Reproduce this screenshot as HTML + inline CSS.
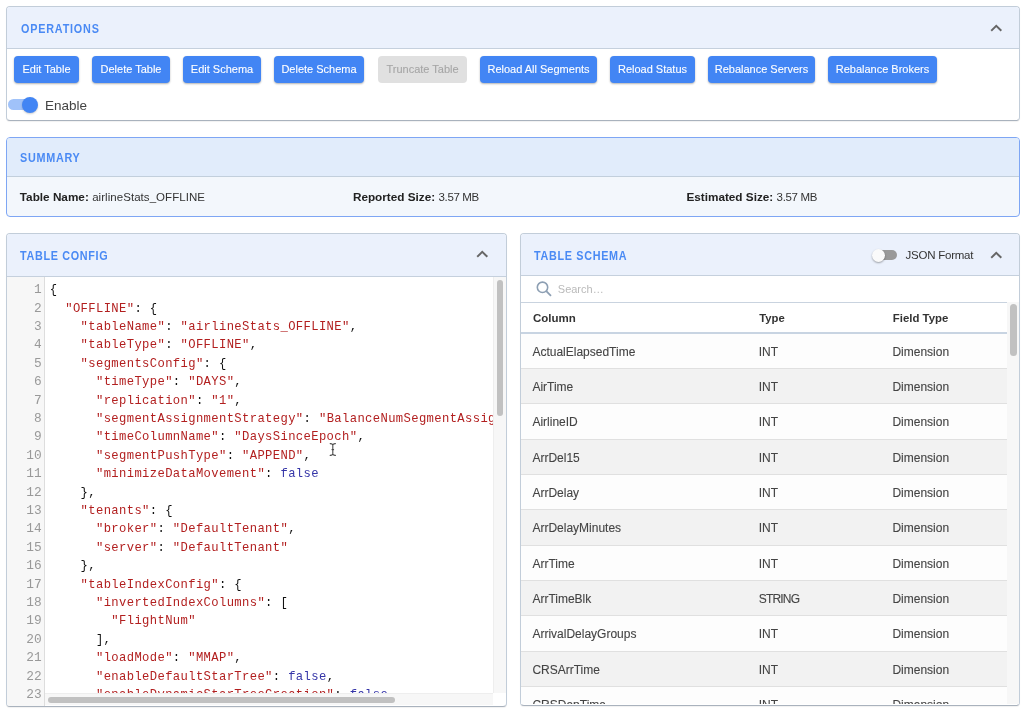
<!DOCTYPE html><html><head><meta charset="utf-8"><style>
*{box-sizing:border-box;margin:0;padding:0}
html,body{width:1024px;height:712px;overflow:hidden;background:#fff;font-family:"Liberation Sans", sans-serif;}
.abs{position:absolute}
.panel{position:absolute;border:1px solid #c2cdd9;border-bottom-color:#a9b2bd;border-radius:4px;background:#fff;box-shadow:0 1px 1px rgba(0,0,0,0.06);overflow:hidden}
.hdr{position:absolute;left:0;right:0;top:0;background:#ebf1fc;border-bottom:1px solid #c5d0dd}
.title{position:absolute;font-weight:bold;font-size:12px;line-height:12px;color:#4a8af4;white-space:nowrap;letter-spacing:1px;transform:scaleX(0.9);transform-origin:0 0}
.btn{position:absolute;top:56px;height:27px;background:#4285f4;color:#fff;border-radius:4px;font-size:11px;line-height:27px;text-align:center;white-space:nowrap;box-shadow:0 1px 2px rgba(0,0,0,0.3);-webkit-text-stroke:0.1px currentColor}
.btn.dis{background:#e0e0e0;color:#a6a6a6;box-shadow:none}
.chev{position:absolute}
.txt{position:absolute;white-space:nowrap;font-size:12px;line-height:12px;color:#333}
.code{position:absolute;white-space:pre;font-family:"Liberation Mono", monospace;font-size:12.2px;letter-spacing:0.375px;line-height:18.39px;color:#111}
.s{color:#b21f1f}
.a{color:#3535a8}
.ln{position:absolute;font-family:"Liberation Mono", monospace;font-size:12.8px;line-height:18.39px;color:#999;text-align:right;white-space:pre}
</style></head><body><div id="root" style="position:absolute;left:0;top:0;width:1024px;height:712px;will-change:transform">
<div class="panel" style="left:6px;top:6px;width:1014px;height:115px">
<div class="hdr" style="height:42px"></div>
<div class="title" style="left:14px;top:16px;letter-spacing:0.9px">OPERATIONS</div>
</div>
<svg class="abs" style="left:989.5px;top:24.3px" width="12.5" height="8" viewBox="-1 -1 12.5 8"><polyline points="0.9,5.1 5.25,0.9 9.6,5.1" fill="none" stroke="#666" stroke-width="2" stroke-linecap="square"/></svg>
<div class="btn" style="left:14px;width:65px">Edit Table</div>
<div class="btn" style="left:92px;width:78px">Delete Table</div>
<div class="btn" style="left:183px;width:78px">Edit Schema</div>
<div class="btn" style="left:274px;width:90px">Delete Schema</div>
<div class="btn dis" style="left:378px;width:89px">Truncate Table</div>
<div class="btn" style="left:480px;width:117px">Reload All Segments</div>
<div class="btn" style="left:610px;width:85px">Reload Status</div>
<div class="btn" style="left:708px;width:107px">Rebalance Servers</div>
<div class="btn" style="left:828px;width:109px">Rebalance Brokers</div>
<div class="abs" style="left:8px;top:99px;width:28px;height:11px;border-radius:6px;background:#a0c2f9"></div>
<div class="abs" style="left:22px;top:96.5px;width:16px;height:16px;border-radius:50%;background:#4285f4;box-shadow:0 1px 2px rgba(0,0,0,0.2)"></div>
<div class="txt" style="left:45px;top:99px;font-size:13.5px;line-height:14px;color:#444">Enable</div>
<div class="panel" style="left:6px;top:137px;width:1014px;height:80px;border-color:#7ea6f4;background:#f3f7fc;box-shadow:none">
<div class="hdr" style="height:39px;background:#e1ecfb;border-bottom-color:#c2cfdc"></div>
<div class="title" style="left:13px;top:14px;letter-spacing:0.8px">SUMMARY</div>
</div>
<div class="txt" style="left:19.8px;top:191px"><b style="color:#222;font-size:11.75px">Table Name:</b> <span style="font-size:11.5px;letter-spacing:0.05px">airlineStats_OFFLINE</span></div>
<div class="txt" style="left:352.9px;top:191px"><b style="color:#222;font-size:11.75px">Reported Size:</b> <span style="font-size:11.5px;letter-spacing:-0.35px">3.57 MB</span></div>
<div class="txt" style="left:686.4px;top:191px"><b style="color:#222;font-size:11.75px">Estimated Size:</b> <span style="font-size:11.5px;letter-spacing:-0.35px">3.57 MB</span></div>
<div class="panel" style="left:6px;top:233px;width:501px;height:474px">
<div class="hdr" style="height:43px"></div>
<div class="title" style="left:13px;top:16px;letter-spacing:0.75px">TABLE CONFIG</div>
<div class="abs" style="left:0;top:43px;width:38px;bottom:0;background:#f7f7f7;border-right:1px solid #ddd"></div>
</div>
<svg class="abs" style="left:476px;top:250.3px" width="12.5" height="8" viewBox="-1 -1 12.5 8"><polyline points="0.9,5.1 5.25,0.9 9.6,5.1" fill="none" stroke="#666" stroke-width="2" stroke-linecap="square"/></svg>
<div class="abs" style="left:45px;top:277px;width:448px;height:416px;overflow:hidden">
<div class="code" style="left:4.8px;top:4.300000000000011px">{
  <span class="s">&quot;OFFLINE&quot;</span>: {
    <span class="s">&quot;tableName&quot;</span>: <span class="s">&quot;airlineStats_OFFLINE&quot;</span>,
    <span class="s">&quot;tableType&quot;</span>: <span class="s">&quot;OFFLINE&quot;</span>,
    <span class="s">&quot;segmentsConfig&quot;</span>: {
      <span class="s">&quot;timeType&quot;</span>: <span class="s">&quot;DAYS&quot;</span>,
      <span class="s">&quot;replication&quot;</span>: <span class="s">&quot;1&quot;</span>,
      <span class="s">&quot;segmentAssignmentStrategy&quot;</span>: <span class="s">&quot;BalanceNumSegmentAssignmentStrategy&quot;</span>,
      <span class="s">&quot;timeColumnName&quot;</span>: <span class="s">&quot;DaysSinceEpoch&quot;</span>,
      <span class="s">&quot;segmentPushType&quot;</span>: <span class="s">&quot;APPEND&quot;</span>,
      <span class="s">&quot;minimizeDataMovement&quot;</span>: <span class="a">false</span>
    },
    <span class="s">&quot;tenants&quot;</span>: {
      <span class="s">&quot;broker&quot;</span>: <span class="s">&quot;DefaultTenant&quot;</span>,
      <span class="s">&quot;server&quot;</span>: <span class="s">&quot;DefaultTenant&quot;</span>
    },
    <span class="s">&quot;tableIndexConfig&quot;</span>: {
      <span class="s">&quot;invertedIndexColumns&quot;</span>: [
        <span class="s">&quot;FlightNum&quot;</span>
      ],
      <span class="s">&quot;loadMode&quot;</span>: <span class="s">&quot;MMAP&quot;</span>,
      <span class="s">&quot;enableDefaultStarTree&quot;</span>: <span class="a">false</span>,
      <span class="s">&quot;enableDynamicStarTreeCreation&quot;</span>: <span class="a">false</span>,</div>
</div>
<div class="abs" style="left:7px;top:277px;width:37px;height:428px;overflow:hidden">
<div class="ln" style="right:2.4px;top:4.300000000000011px">1
2
3
4
5
6
7
8
9
10
11
12
13
14
15
16
17
18
19
20
21
22
23</div>
</div>
<div class="abs" style="left:493px;top:277px;width:13px;height:416px;background:#f7f7f7;border-left:1px solid #eee"></div>
<div class="abs" style="left:497px;top:279.5px;width:6px;height:136.5px;border-radius:3px;background:#c1c1c1"></div>
<div class="abs" style="left:45px;top:693px;width:448px;height:12px;background:#f7f7f7;border-top:1px solid #eee"></div>
<div class="abs" style="left:48px;top:697px;width:347px;height:6px;border-radius:3px;background:#c1c1c1"></div>
<svg class="abs" style="left:328px;top:441px" width="10" height="17" viewBox="0 0 10 17"><path d="M2.2 2.6Q4.8 2.8 4.8 4.2Q4.8 2.8 7.4 2.6M4.8 4v9.4M2.2 14.4Q4.8 14.2 4.8 12.8Q4.8 14.2 7.4 14.4M4 8.6h1.6" fill="none" stroke="#4a4a4a" stroke-width="1.1" stroke-linecap="round"/></svg>
<div class="panel" style="left:520px;top:233px;width:500px;height:473px">
<div class="hdr" style="height:42px"></div>
<div class="title" style="left:13px;top:16px;letter-spacing:0.76px">TABLE SCHEMA</div>
</div>
<svg class="abs" style="left:989.5px;top:250.6px" width="12.5" height="8" viewBox="-1 -1 12.5 8"><polyline points="0.9,5.1 5.25,0.9 9.6,5.1" fill="none" stroke="#666" stroke-width="2" stroke-linecap="square"/></svg>
<div class="abs" style="left:878px;top:249.5px;width:19px;height:10.5px;border-radius:5px;background:#999"></div>
<div class="abs" style="left:871.5px;top:248.5px;width:13.5px;height:13.5px;border-radius:50%;background:#fafafa;box-shadow:0 1px 2px rgba(0,0,0,0.35)"></div>
<div class="txt" style="left:905.6px;top:249px;color:#333;font-size:11.5px;letter-spacing:-0.25px">JSON Format</div>
<svg class="abs" style="left:535px;top:280px" width="18" height="18" viewBox="0 0 18 18"><circle cx="7.5" cy="7.3" r="5.2" fill="none" stroke="#8d9fb3" stroke-width="1.6"/><line x1="11.3" y1="11.1" x2="16" y2="15.8" stroke="#8d9fb3" stroke-width="1.8"/></svg>
<div class="txt" style="left:557.8px;top:283px;color:#bababa;font-size:11px">Search…</div>
<div class="abs" style="left:521px;top:302px;width:486px;height:1px;background:#c9d3df"></div>
<div class="txt" style="left:533px;top:312px;font-weight:bold;font-size:11.5px;color:#333">Column</div>
<div class="txt" style="left:759.2px;top:312px;font-weight:bold;font-size:11.3px;color:#333">Type</div>
<div class="txt" style="left:892.8px;top:312px;font-weight:bold;font-size:11.4px;color:#333">Field Type</div>
<div class="abs" style="left:521px;top:332px;width:486px;height:2px;background:#c8d4e2"></div>
<div class="abs" style="left:521px;top:334px;width:486px;height:370px;overflow:hidden">
<div class="abs" style="left:0;width:486px;top:0px;height:34px;background:#fdfdfd"></div>
<div class="abs" style="left:0;width:486px;top:34px;height:1px;background:#e0e0e0"></div>
<div class="txt" style="left:11.4px;top:11.60px;color:#444;-webkit-text-stroke:0.1px currentColor">ActualElapsedTime</div>
<div class="txt" style="left:237.7px;top:11.60px;color:#444;-webkit-text-stroke:0.1px currentColor">INT</div>
<div class="txt" style="left:371.4px;top:11.60px;color:#444;-webkit-text-stroke:0.1px currentColor">Dimension</div>
<div class="abs" style="left:0;width:486px;top:35px;height:34px;background:#f2f2f2"></div>
<div class="abs" style="left:0;width:486px;top:69px;height:1px;background:#e0e0e0"></div>
<div class="txt" style="left:11.4px;top:46.96px;color:#444;-webkit-text-stroke:0.1px currentColor">AirTime</div>
<div class="txt" style="left:237.7px;top:46.96px;color:#444;-webkit-text-stroke:0.1px currentColor">INT</div>
<div class="txt" style="left:371.4px;top:46.96px;color:#444;-webkit-text-stroke:0.1px currentColor">Dimension</div>
<div class="abs" style="left:0;width:486px;top:70px;height:35px;background:#fdfdfd"></div>
<div class="abs" style="left:0;width:486px;top:105px;height:1px;background:#e0e0e0"></div>
<div class="txt" style="left:11.4px;top:82.32px;color:#444;-webkit-text-stroke:0.1px currentColor">AirlineID</div>
<div class="txt" style="left:237.7px;top:82.32px;color:#444;-webkit-text-stroke:0.1px currentColor">INT</div>
<div class="txt" style="left:371.4px;top:82.32px;color:#444;-webkit-text-stroke:0.1px currentColor">Dimension</div>
<div class="abs" style="left:0;width:486px;top:106px;height:34px;background:#f2f2f2"></div>
<div class="abs" style="left:0;width:486px;top:140px;height:1px;background:#e0e0e0"></div>
<div class="txt" style="left:11.4px;top:117.68px;color:#444;-webkit-text-stroke:0.1px currentColor">ArrDel15</div>
<div class="txt" style="left:237.7px;top:117.68px;color:#444;-webkit-text-stroke:0.1px currentColor">INT</div>
<div class="txt" style="left:371.4px;top:117.68px;color:#444;-webkit-text-stroke:0.1px currentColor">Dimension</div>
<div class="abs" style="left:0;width:486px;top:141px;height:34px;background:#fdfdfd"></div>
<div class="abs" style="left:0;width:486px;top:175px;height:1px;background:#e0e0e0"></div>
<div class="txt" style="left:11.4px;top:153.04px;color:#444;-webkit-text-stroke:0.1px currentColor">ArrDelay</div>
<div class="txt" style="left:237.7px;top:153.04px;color:#444;-webkit-text-stroke:0.1px currentColor">INT</div>
<div class="txt" style="left:371.4px;top:153.04px;color:#444;-webkit-text-stroke:0.1px currentColor">Dimension</div>
<div class="abs" style="left:0;width:486px;top:176px;height:35px;background:#f2f2f2"></div>
<div class="abs" style="left:0;width:486px;top:211px;height:1px;background:#e0e0e0"></div>
<div class="txt" style="left:11.4px;top:188.40px;color:#444;-webkit-text-stroke:0.1px currentColor">ArrDelayMinutes</div>
<div class="txt" style="left:237.7px;top:188.40px;color:#444;-webkit-text-stroke:0.1px currentColor">INT</div>
<div class="txt" style="left:371.4px;top:188.40px;color:#444;-webkit-text-stroke:0.1px currentColor">Dimension</div>
<div class="abs" style="left:0;width:486px;top:212px;height:34px;background:#fdfdfd"></div>
<div class="abs" style="left:0;width:486px;top:246px;height:1px;background:#e0e0e0"></div>
<div class="txt" style="left:11.4px;top:223.76px;color:#444;-webkit-text-stroke:0.1px currentColor">ArrTime</div>
<div class="txt" style="left:237.7px;top:223.76px;color:#444;-webkit-text-stroke:0.1px currentColor">INT</div>
<div class="txt" style="left:371.4px;top:223.76px;color:#444;-webkit-text-stroke:0.1px currentColor">Dimension</div>
<div class="abs" style="left:0;width:486px;top:247px;height:34px;background:#f2f2f2"></div>
<div class="abs" style="left:0;width:486px;top:281px;height:1px;background:#e0e0e0"></div>
<div class="txt" style="left:11.4px;top:259.12px;color:#444;-webkit-text-stroke:0.1px currentColor">ArrTimeBlk</div>
<div class="txt" style="left:237.7px;top:259.12px;color:#444;-webkit-text-stroke:0.1px currentColor;letter-spacing:-0.8px">STRING</div>
<div class="txt" style="left:371.4px;top:259.12px;color:#444;-webkit-text-stroke:0.1px currentColor">Dimension</div>
<div class="abs" style="left:0;width:486px;top:282px;height:35px;background:#fdfdfd"></div>
<div class="abs" style="left:0;width:486px;top:317px;height:1px;background:#e0e0e0"></div>
<div class="txt" style="left:11.4px;top:294.48px;color:#444;-webkit-text-stroke:0.1px currentColor">ArrivalDelayGroups</div>
<div class="txt" style="left:237.7px;top:294.48px;color:#444;-webkit-text-stroke:0.1px currentColor">INT</div>
<div class="txt" style="left:371.4px;top:294.48px;color:#444;-webkit-text-stroke:0.1px currentColor">Dimension</div>
<div class="abs" style="left:0;width:486px;top:318px;height:34px;background:#f2f2f2"></div>
<div class="abs" style="left:0;width:486px;top:352px;height:1px;background:#e0e0e0"></div>
<div class="txt" style="left:11.4px;top:329.84px;color:#444;-webkit-text-stroke:0.1px currentColor">CRSArrTime</div>
<div class="txt" style="left:237.7px;top:329.84px;color:#444;-webkit-text-stroke:0.1px currentColor">INT</div>
<div class="txt" style="left:371.4px;top:329.84px;color:#444;-webkit-text-stroke:0.1px currentColor">Dimension</div>
<div class="abs" style="left:0;width:486px;top:353px;height:35px;background:#fdfdfd"></div>
<div class="abs" style="left:0;width:486px;top:388px;height:1px;background:#e0e0e0"></div>
<div class="txt" style="left:11.4px;top:365.20px;color:#444;-webkit-text-stroke:0.1px currentColor">CRSDepTime</div>
<div class="txt" style="left:237.7px;top:365.20px;color:#444;-webkit-text-stroke:0.1px currentColor">INT</div>
<div class="txt" style="left:371.4px;top:365.20px;color:#444;-webkit-text-stroke:0.1px currentColor">Dimension</div>
</div>
<div class="abs" style="left:1007px;top:302px;width:12px;height:402px;background:#f7f7f7"></div>
<div class="abs" style="left:1010px;top:304px;width:7px;height:51.5px;border-radius:3.5px;background:#c1c1c1"></div>
</div></body></html>
